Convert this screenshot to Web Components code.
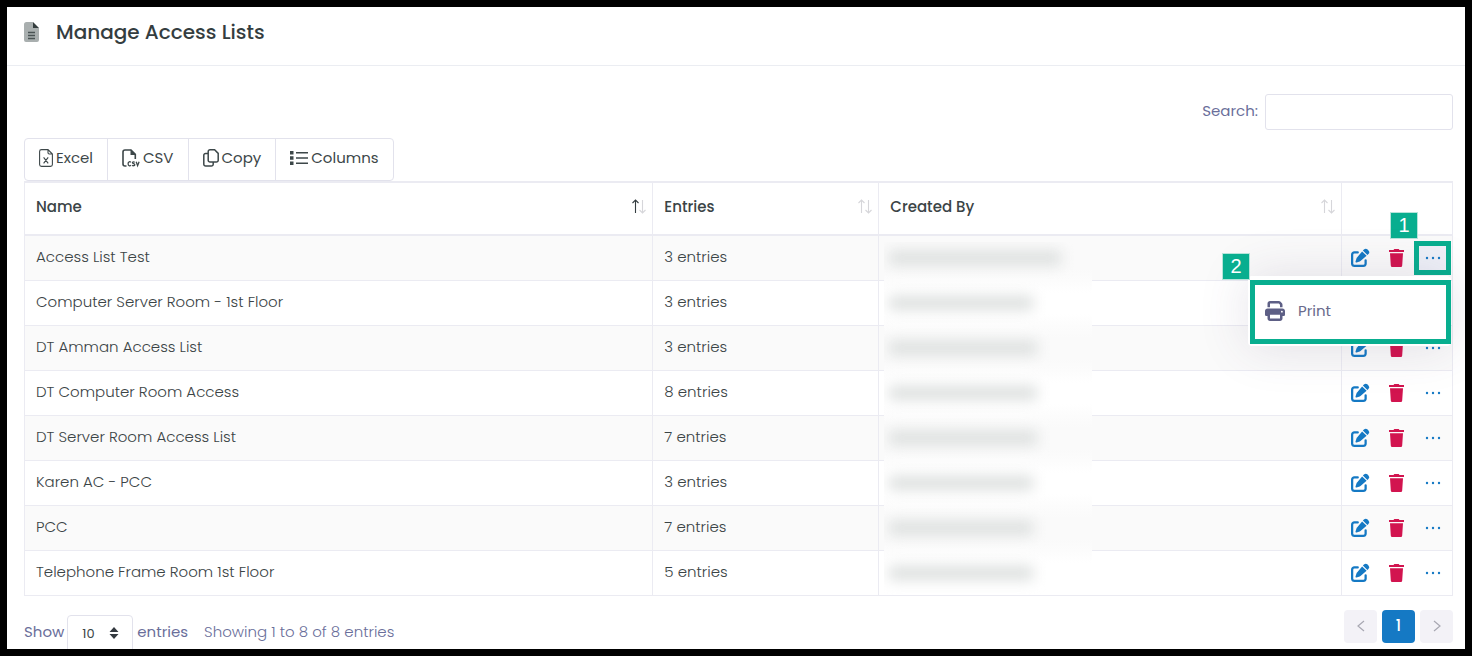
<!DOCTYPE html>
<html lang="en">
<head>
<meta charset="utf-8">
<title>Manage Access Lists</title>
<style>
  html, body { margin: 0; height: 100%; }
  body {
    font-family: Poppins, Inter, "Open Sans", sans-serif;
    font-size: 15px;
    color: #3b4446;
    --line: #ebebf2;
    --field-line: #e2e2ec;
    --blue: #1579c4;
    --red: #d2144f;
    --label: #6a6e9a;
    --mark: #08ae8f;
    background: #000;
  }
</style>
</head>
<body>
<access-page>
  <page-header slot="header">Manage Access Lists</page-header>
  <search-field></search-field>
  <export-toolbar></export-toolbar>
  <access-table></access-table>
  <table-footer></table-footer>
</access-page>

<script>
const define = (name, html) => customElements.define(name, class extends HTMLElement {
  connectedCallback() {
    if (this.shadowRoot) return;
    this.attachShadow({ mode: "open" }).innerHTML = typeof html === "function" ? html(this) : html;
  }
});

const icons = {
  file: ["0 0 15 20", `<path d="M2.500 0H9v6h6v12a2 2 0 0 1-2 2H2a2 2 0 0 1-2-2V2.500A2.500 2.500 0 0 1 2.500 0z" fill="#a9afaf"/><path d="M9 0l6 6H9z" fill="#343d3e"/><path d="M4 10.500h7M4 13.500h7M4 16.500h7" stroke="#4a5354" stroke-width="1.300"/>`],
  excel: ["0 0 14 18", `<path d="M2.500.6H9l4.400 4.400v10.500a1.900 1.900 0 0 1-1.900 1.900h-9A1.900 1.900 0 0 1 .6 15.500v-13A1.900 1.900 0 0 1 2.500.6zM9 .6v3.200C9 4.600 9.400 5 10.200 5h3.200M4.600 8.300l4.600 6M9.200 8.300l-4.600 6" fill="none" stroke="currentColor" stroke-width="1.100"/>`],
  csv: ["0 0 18 18", `<path d="M4.500 17H3a2 2 0 0 1-2-2V3a2 2 0 0 1 2-2h6l4.300 4.300V10" fill="none" stroke="currentColor" stroke-width="1.600"/><path d="M8.500.5V6h5.300z" fill="currentColor"/><path d="M8.800 13.300c-.4-.5-1-.7-1.600-.5-.8.200-1.100 1-1.100 2 0 1.200.4 1.900 1.200 2 .6.100 1.200-.1 1.500-.6M12.700 13.300c-.5-.6-2.300-.8-2.300.3 0 1.200 2.400.8 2.400 2.100 0 1.300-2 1.300-2.600.4M14.200 12.700l1.400 4 1.500-4" fill="none" stroke="currentColor" stroke-width="1.300"/>`],
  copy: ["0 0 16 18", `<path d="M7 .8h4.600l3.600 3.600v6.800a1.800 1.800 0 0 1-1.800 1.800H7a1.800 1.800 0 0 1-1.800-1.800V2.600A1.800 1.800 0 0 1 7 .8zM5 4.500H2.600A1.800 1.800 0 0 0 .8 6.300v9a1.800 1.800 0 0 0 1.800 1.800h5.800a1.800 1.800 0 0 0 1.800-1.800V13" fill="none" stroke="currentColor" stroke-width="1.500"/>`],
  columns: ["0 0 18 16", `<path d="M0 1h3.500v3.500H0zM0 6.300h3.500v3.500H0zM0 11.600h3.500v3.500H0z" fill="currentColor"/><path d="M6 2.700h12M6 8h12M6 13.300h12" stroke="currentColor" stroke-width="1.500"/>`],
  edit: ["0 0 512 512", `<path fill="currentColor" d="M472 16a74 74 0 0 0-104 0l-30 30 128 128 30-30a74 74 0 0 0 0-104zM172 241c-6 6-11 14-14 22l-30 89c-3 9 0 18 6 25s16 9 25 6l89-30c8-3 16-8 22-14l174-144L316 68zM96 64c-53 0-96 43-96 96v256c0 53 43 96 96 96h256c53 0 96-43 96-96v-96a32 32 0 0 0-64 0v96a32 32 0 0 1-32 32H96a32 32 0 0 1-32-32V160a32 32 0 0 1 32-32h96a32 32 0 0 0 0-64z"/>`],
  trash: ["0 0 15 18", `<path fill="currentColor" d="M0 1h4.500l.8-1h4.400l.8 1H15v2H0zM1 4.200h13l-.8 12.300a1.500 1.500 0 0 1-1.500 1.500H3.300a1.500 1.500 0 0 1-1.500-1.500z"/>`],
  dots: ["0 0 16 4", `<g fill="currentColor"><circle cx="2" cy="2" r="1.200"/><circle cx="8" cy="2" r="1.200"/><circle cx="14" cy="2" r="1.200"/></g>`],
  print: ["0 0 512 512", `<path fill="currentColor" d="M128 0C93 0 64 29 64 64v96h64V64h227l29 29v67h64V93c0-17-7-33-19-45L400 19C388 7 372 0 355 0zM384 352v96H128V352zm64 32h32a32 32 0 0 0 32-32V256c0-35-29-64-64-64H64c-35 0-64 29-64 64v96a32 32 0 0 0 32 32h32v64c0 35 29 64 64 64h256c35 0 64-29 64-64zM432 248a24 24 0 1 1 0 48 24 24 0 1 1 0-48z"/>`],
  sort: ["0 0 13 14", `<path d="M3.500 13V0M.5 3l3-3 3 3" fill="none" stroke="var(--up, #d6d6da)" stroke-width="1.100"/><path d="M10.500 0v13M7.500 10l3 3 3-3" fill="none" stroke="#d6d6da" stroke-width="1.100"/>`],
  updown: ["0 0 10 12", `<path d="M5 0l4.500 5h-9zM5 12L.5 7h9z" fill="#343a40"/>`],
  left: ["0 0 8 12", `<path d="M7 1L1 6l6 5" fill="none" stroke="#a8a8b2" stroke-width="1.200"/>`],
  right: ["0 0 8 12", `<path d="M1 1l6 5-6 5" fill="none" stroke="#a8a8b2" stroke-width="1.200"/>`]
};

define("ui-icon", el => {
  const [box, body] = icons[el.getAttribute("name")];
  const [w, h] = (el.getAttribute("size") || box.split(" ").slice(2).join("x")).split("x");
  return `<style>:host{display:inline-flex;flex:none}svg{display:block;overflow:visible}</style>
    <svg width="${w}" height="${h}" viewBox="${box}" aria-hidden="true">${body}</svg>`;
});

define("access-page", `
<style>
  :host { display: block; box-sizing: border-box; height: 100vh; padding: 7px; overflow: hidden; background: #000; }
  main { box-sizing: border-box; height: 100%; background: #fff; overflow: hidden; }
  .body { display: flex; flex-direction: column; padding: 28px 12px 0 17px; }
</style>
<main><slot name="header"></slot><div class="body"><slot></slot></div></main>`);

define("page-header", `
<style>
  :host { display: block; border-bottom: 1px solid #ebedf2; }
  header { display: flex; align-items: center; gap: 17px; height: 50px; padding: 0 17px 8px; }
  h1 { margin: 0; font-size: 20px; font-weight: 500; line-height: 30px; color: #343d40; }
</style>
<header><ui-icon name="file"></ui-icon><h1><slot></slot></h1></header>`);

define("search-field", `
<style>
  :host { display: flex; justify-content: flex-end; align-items: center; margin-bottom: 8px; }
  label { color: var(--label); margin-right: 7px; padding-bottom: 2px; line-height: 20px; }
  input { box-sizing: border-box; width: 188px; height: 36px; padding: 0 12px; border: 1px solid var(--field-line); border-radius: 3px; font: inherit; background: #fff; outline: 0; }
</style>
<label for="q">Search:</label><input id="q" type="search">`);

define("export-toolbar", `
<style>
  :host { display: flex; }
  div { display: flex; border: 1px solid var(--field-line); border-radius: 4px; }
  button { display: flex; align-items: center; gap: 3px; height: 41px; padding: 0 14px 4px; border: 0; border-left: 1px solid var(--field-line); background: none; font: inherit; color: #3d4749; white-space: nowrap; }
  button:first-child { border-left: 0; }
</style>
<div role="group" aria-label="Export">
  <button type="button"><ui-icon name="excel"></ui-icon>Excel</button>
  <button type="button"><ui-icon name="csv"></ui-icon>CSV</button>
  <button type="button"><ui-icon name="copy"></ui-icon>Copy</button>
  <button type="button"><ui-icon name="columns"></ui-icon>Columns</button>
</div>`);

define("step-badge", `
<style>
  :host { display: block; box-sizing: border-box; width: 26px; height: 25px; background: var(--mark); color: #fff; font: 20px/25px "Liberation Sans", Arial, sans-serif; text-align: center; outline: 1px solid #b6e4da; }
</style><slot></slot>`);

define("redacted-text", el => `
<style>
  :host { display: block; position: absolute; left: 5px; top: 0; width: 208px; height: 45px; overflow: hidden; background: linear-gradient(#fcfcfc, var(--row) 12px, var(--row) 33px, #fcfcfc); }
  :host([edge="first"]) { top: 6px; height: 39px; background: linear-gradient(var(--row) 27px, #fcfcfc); }
  :host([edge="last"]) { height: 44px; background: linear-gradient(#fcfcfc, var(--row) 12px); }
  i { display: block; width: ${el.getAttribute("width")}px; height: 14px; margin: 15px 0 0 5px; background: #dcdfde; filter: blur(7px); }
  :host([edge="first"]) i { margin-top: 9px; }
</style><i></i>`);

define("more-menu", `
<style>
  :host { display: block; position: absolute; z-index: 2; top: 40px; right: 1px; width: 203px; background: #fff; border-radius: 4px; padding: 4px 0 2px 2px; box-sizing: border-box; box-shadow: 0 0 50px rgba(82, 63, 105, .15); }
  button { display: flex; align-items: center; gap: 13px; box-sizing: border-box; width: 100%; height: 64px; padding: 0 10px 2px; border: 5px solid var(--mark); background: #fff; font: inherit; color: #6a6b8c; }
  ui-icon { color: #5d5f85; }
  step-badge { position: absolute; top: -22px; left: -25px; }
</style>
<step-badge>2</step-badge>
<button type="button" role="menuitem"><ui-icon name="print" size="20x20"></ui-icon>Print</button>`);

define("row-actions", el => `
<style>
  :host { display: flex; align-items: center; height: 44px; color: var(--blue); font-weight: 400; }
  button { display: flex; align-items: center; justify-content: center; box-sizing: border-box; width: 36px; height: 34px; padding: 0; border: 0; background: none; color: inherit; }
  .del { color: var(--red); }
  .more { width: 37px; }
  :host([open]) .more { border: 5px solid var(--mark); background: #eef0f7; }
  step-badge { position: absolute; right: 35px; top: -23px; }
</style>
<button type="button" aria-label="Edit"><ui-icon name="edit" size="18x18"></ui-icon></button>
<button type="button" class="del" aria-label="Delete"><ui-icon name="trash"></ui-icon></button>
<button type="button" class="more" aria-label="More"><ui-icon name="dots"></ui-icon></button>
${el.hasAttribute("open") ? "<step-badge>1</step-badge><more-menu></more-menu>" : ""}`);

const rows = [
  ["Access List Test", 3, 172],
  ["Computer Server Room - 1st Floor", 3, 144],
  ["DT Amman Access List", 3, 148],
  ["DT Computer Room Access", 8, 148],
  ["DT Server Room Access List", 7, 148],
  ["Karen AC - PCC", 3, 144],
  ["PCC", 7, 144],
  ["Telephone Frame Room 1st Floor", 5, 144]
];

define("access-table", () => `
<style>
  :host { display: block; }
  table { width: 100%; table-layout: fixed; border-collapse: separate; border-spacing: 0; border-left: 1px solid var(--line); border-top: 2px solid var(--line); }
  th, td { box-sizing: border-box; padding: 0 11px; text-align: left; border-right: 1px solid var(--line); border-bottom: 1px solid var(--line); }
  th { height: 53px; border-bottom-width: 2px; font-weight: 500; padding-bottom: 4px; }
  th div { display: flex; justify-content: space-between; align-items: center; line-height: 20px; margin-right: -4px; }
  th.asc { --up: #343d40; }
  td { height: 45px; font-weight: 300; line-height: 20px; position: relative; }
  tr { --row: #fff; }
  tbody tr:nth-child(odd) { --row: #fafafa; }
  td { background: var(--row); }
  td:last-child { padding: 0; }
  td:nth-child(-n+2) { padding-bottom: 2px; }
  .name { width: 44%; } .entries { width: 226px; } .actions { width: 111px; }
</style>
<table>
  <thead><tr>
    <th class="name asc" scope="col"><div>Name<ui-icon name="sort"></ui-icon></div></th>
    <th class="entries" scope="col"><div>Entries<ui-icon name="sort"></ui-icon></div></th>
    <th scope="col"><div>Created By<ui-icon name="sort"></ui-icon></div></th>
    <th class="actions" scope="col" aria-label="Actions"></th>
  </tr></thead>
  <tbody>${rows.map(([name, count, width], i) => `<tr>
    <td>${name}</td><td>${count} entries</td>
    <td><redacted-text width="${width}" ${i === 0 ? 'edge="first"' : i === rows.length - 1 ? 'edge="last"' : ""}></redacted-text></td>
    <td><row-actions ${i === 0 ? "open" : ""}></row-actions></td></tr>`).join("")}</tbody>
</table>`);

define("table-footer", `
<style>
  :host { display: flex; justify-content: space-between; align-items: flex-start; margin-top: 14px; color: var(--label); line-height: 20px; }
  .left { display: flex; align-items: center; margin-top: 5px; }
  .left > label, .left > span { padding-bottom: 4px; }
  .pick { position: relative; display: flex; margin: 0 4px 0 3px; }
  .pick ui-icon { position: absolute; right: 14px; top: 12px; pointer-events: none; }
  select { appearance: none; box-sizing: border-box; width: 66px; height: 38px; padding: 0 14px; border: 1px solid var(--field-line); border-radius: 4px; background: #fff; font: inherit; font-size: 13px; color: #3b4446; }
  .left > .info { margin-left: 16px; font-weight: 300; }
  nav { display: flex; gap: 5px; }
  nav button { display: flex; align-items: center; justify-content: center; width: 33px; height: 33px; padding: 0 0 2px; border: 0; border-radius: 4px; background: #f3f2f7; font: inherit; font-weight: 500; color: #fff; }
  nav [aria-current] { background: var(--blue); }
</style>
<div class="left">
  <label for="n">Show</label>
  <div class="pick"><select id="n"><option>10</option><option>25</option><option>50</option></select><ui-icon name="updown"></ui-icon></div>
  <span>entries</span><span class="info">Showing 1 to 8 of 8 entries</span>
</div>
<nav aria-label="Pages">
  <button type="button" aria-label="Previous"><ui-icon name="left"></ui-icon></button>
  <button type="button" aria-current="page">1</button>
  <button type="button" aria-label="Next"><ui-icon name="right"></ui-icon></button>
</nav>`);
</script>
</body>
</html>
